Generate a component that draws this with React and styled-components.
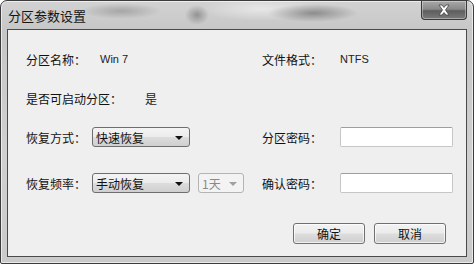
import styled, { createGlobalStyle } from "styled-components";

const GlobalStyle = createGlobalStyle`
  html, body {
    margin: 0;
    padding: 0;
    width: 474px;
    height: 264px;
    overflow: hidden;
    background: #fff;
  }
  body {
    font-family: "Noto Sans CJK SC", "Liberation Sans", sans-serif;
    color: #111;
  }
`;

// window frame with blurred glass look
const Frame = styled.div`
  box-sizing: border-box;
  width: 474px;
  height: 264px;
  border: 1px solid #3c3c3c;
  border-radius: 7px 7px 2px 2px;
  background:
    radial-gradient(ellipse 40px 8px at 120px 10px, rgba(90, 90, 90, 0.35), transparent),
    radial-gradient(ellipse 12px 10px at 196px 14px, rgba(60, 60, 60, 0.4), transparent),
    radial-gradient(ellipse 45px 9px at 312px 12px, rgba(60, 60, 60, 0.45), transparent),
    radial-gradient(ellipse 60px 12px at 260px 8px, rgba(255, 255, 255, 0.5), transparent),
    linear-gradient(180deg, #d2d2d2 0%, #c6c6c6 12%, #d0d0d0 60%, #cacaca 100%);
  display: flex;
  flex-direction: column;
  padding: 0 6px 6px 6px;
  box-shadow: inset 0 0 0 1px rgba(255, 255, 255, 0.6);
`;

const TitleBar = styled.div`
  height: 28px;
  display: flex;
  align-items: flex-start;
  justify-content: space-between;
`;

const Title = styled.div`
  font-size: 13px;
  line-height: 16px;
  padding: 7px 0 0 1px;
  color: #151515;
`;

const CloseButton = styled.div`
  width: 46px;
  height: 19px;
  box-sizing: border-box;
  border: 1px solid #3a3a3a;
  border-top: none;
  border-radius: 0 0 4px 4px;
  background: linear-gradient(180deg, #a8a8a8 0%, #8a8a8a 45%, #5e5e5e 55%, #7a7a7a 100%);
  box-shadow: inset 0 0 0 1px rgba(255, 255, 255, 0.35);
  display: flex;
  align-items: center;
  justify-content: center;
`;

const Panel = styled.div`
  flex: 1;
  box-sizing: border-box;
  border: 1px solid #4a4a4a;
  background: #efefef;
  padding: 19px 20px 12px 18px;
  display: flex;
  flex-direction: column;
`;

const Row = styled.div`
  display: flex;
  align-items: center;
  height: 20px;
  margin-top: ${(p) => p.$gap || 0}px;
`;

const Half = styled.div`
  display: flex;
  align-items: center;
  flex-shrink: 0;
  width: ${(p) => (p.$w ? `${p.$w}px` : "auto")};
`;

const Label = styled.div`
  font-size: 12px;
  width: ${(p) => p.$w}px;
  flex-shrink: 0;
  white-space: nowrap;
  color: #111;
`;

const Value = styled.div`
  font-size: ${(p) => (p.$cjk ? 12 : 11)}px;
  font-family: ${(p) =>
    p.$cjk ? `"Noto Sans CJK SC", sans-serif` : `"Liberation Sans", "DejaVu Sans", sans-serif`};
  color: #222;
`;

const Combo = styled.div`
  box-sizing: border-box;
  flex-shrink: 0;
  width: ${(p) => p.$w}px;
  height: 20px;
  border: 1px solid ${(p) => (p.$disabled ? "#b4b4b4" : "#6e6e6e")};
  border-radius: 3px;
  background: ${(p) =>
    p.$disabled
      ? "#f3f3f3"
      : "linear-gradient(180deg, #f4f4f4 0%, #ececec 48%, #dcdcdc 52%, #cfcfcf 100%)"};
  display: flex;
  align-items: center;
  justify-content: space-between;
  padding: 0 6px 0 3px;
  margin-left: ${(p) => p.$ml || 0}px;
  font-size: 12px;
  color: ${(p) => (p.$disabled ? "#8a8a8a" : "#111")};
`;

const Arrow = styled.span`
  width: 0;
  height: 0;
  border-left: 4px solid transparent;
  border-right: 4px solid transparent;
  border-top: 4px solid ${(p) => (p.$disabled ? "#a0a0a0" : "#111")};
  margin-top: 1px;
`;

const Input = styled.div`
  box-sizing: border-box;
  flex-shrink: 0;
  width: 113px;
  height: 20px;
  background: #fff;
  border: 1px solid #c6c6c6;
  border-top-color: #9e9e9e;
  border-radius: 2px;
`;

const Footer = styled.div`
  margin-top: auto;
  display: flex;
  justify-content: flex-end;
  gap: 9px;
`;

const Button = styled.div`
  box-sizing: border-box;
  width: 72px;
  height: 21px;
  border: 1px solid #707070;
  border-radius: 3px;
  background: linear-gradient(180deg, #f3f3f3 0%, #ebebeb 48%, #dddddd 52%, #cfcfcf 100%);
  box-shadow: inset 0 0 0 1px rgba(255, 255, 255, 0.7);
  display: flex;
  align-items: center;
  justify-content: center;
  font-size: 12px;
  color: #111;
`;

const CloseIcon = () => (
  <svg width="14" height="12" viewBox="0 0 14 12">
    <path
      d="M2 1 L5 1 L7 3.5 L9 1 L12 1 L8.5 6 L12 11 L9 11 L7 8.5 L5 11 L2 11 L5.5 6 Z"
      fill="#fff"
      stroke="#444"
      strokeWidth="0.8"
    />
  </svg>
);

export default function App() {
  return (
    <>
      <GlobalStyle />
      <Frame>
        <TitleBar>
          <Title>分区参数设置</Title>
          <CloseButton>
            <CloseIcon />
          </CloseButton>
        </TitleBar>
        <Panel>
          <Row>
            <Half $w={236}>
              <Label $w={74}>分区名称：</Label>
              <Value>Win 7</Value>
            </Half>
            <Half>
              <Label $w={78}>文件格式：</Label>
              <Value>NTFS</Value>
            </Half>
          </Row>
          <Row $gap={19}>
            <Half $w={236}>
              <Label $w={119}>是否可启动分区：</Label>
              <Value $cjk>是</Value>
            </Half>
          </Row>
          <Row $gap={19}>
            <Half $w={236}>
              <Label $w={66}>恢复方式：</Label>
              <Combo $w={98}>
                快速恢复
                <Arrow />
              </Combo>
            </Half>
            <Half>
              <Label $w={78}>分区密码：</Label>
              <Input />
            </Half>
          </Row>
          <Row $gap={26}>
            <Half $w={236}>
              <Label $w={66}>恢复频率：</Label>
              <Combo $w={98}>
                手动恢复
                <Arrow />
              </Combo>
              <Combo $w={46} $ml={8} $disabled>
                1天
                <Arrow $disabled />
              </Combo>
            </Half>
            <Half>
              <Label $w={78}>确认密码：</Label>
              <Input />
            </Half>
          </Row>
          <Footer>
            <Button>确定</Button>
            <Button>取消</Button>
          </Footer>
        </Panel>
      </Frame>
    </>
  );
}
